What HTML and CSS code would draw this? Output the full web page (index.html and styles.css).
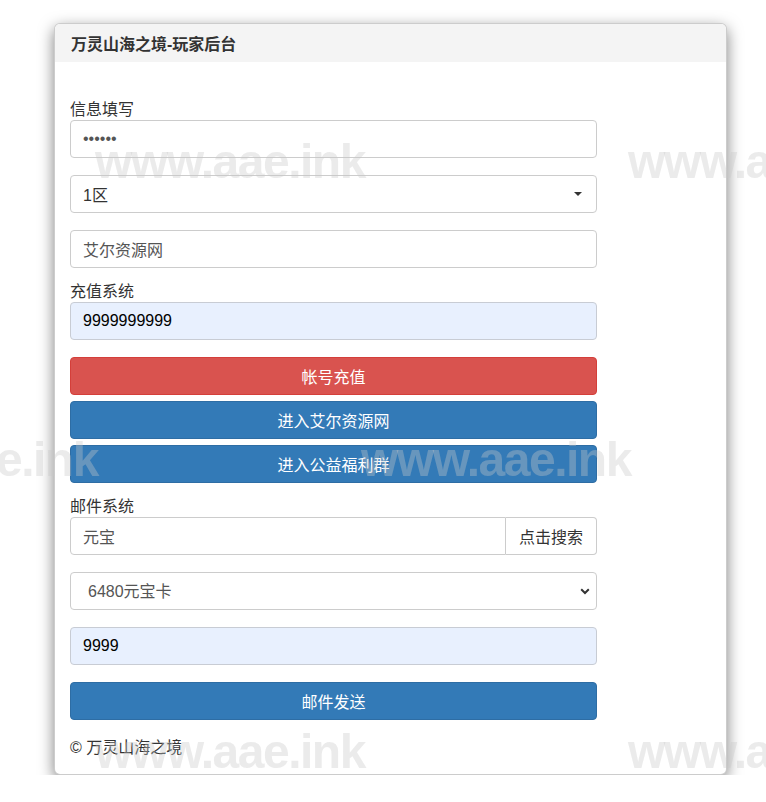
FILE: index.html
```html
<!DOCTYPE html>
<html lang="zh-CN">
<head>
<meta charset="utf-8">
<title>万灵山海之境-玩家后台</title>
<link rel="stylesheet" href="styles.css">
</head>
<body>
<div class="panel">
  <div class="panel-heading">万灵山海之境-玩家后台</div>
  <div class="panel-body">
    <form class="form">
      <label class="lbl">信息填写</label>
      <input class="fc pw gap17" type="password" value="123456">
      <div class="fc picker gap17"><span>1区</span><span class="caret"></span></div>
      <input class="fc gap14" type="text" value="艾尔资源网">

      <label class="lbl">充值系统</label>
      <input class="fc auto gap17" type="text" value="9999999999">
      <button type="button" class="btn red gap6">帐号充值</button>
      <button type="button" class="btn blue gap6">进入艾尔资源网</button>
      <button type="button" class="btn blue gap14">进入公益福利群</button>

      <label class="lbl">邮件系统</label>
      <div class="input-group gap17">
        <input class="fc ig-input" type="text" value="元宝">
        <button type="button" class="ig-btn">点击搜索</button>
      </div>
      <div class="selwrap gap17">
        <select class="fc sel">
          <option>6480元宝卡</option>
        </select>
        <svg class="chev" width="10" height="7" viewBox="0 0 10 7"><path d="M1.2 1.3 L5 5 L8.8 1.3" fill="none" stroke="#333" stroke-width="2"/></svg>
      </div>
      <input class="fc auto gap17" type="text" value="9999">
      <button type="button" class="btn blue">邮件发送</button>
    </form>
    <div class="foot">© 万灵山海之境</div>
  </div>
</div>

<div class="watermarks" aria-hidden="true">
  <span class="wm wm1">www.aae.ink</span>
  <span class="wm wm2">www.aae.ink</span>
  <span class="wm wm3">www.aae.ink</span>
  <span class="wm wm4">www.aae.ink</span>
  <span class="wm wm5">www.aae.ink</span>
  <span class="wm wm6">www.aae.ink</span>
</div>
</body>
</html>
```

FILE: styles.css
```css
html, body {
  margin: 0;
  background: #fff;
}
body {
  font-family: "Liberation Sans", Arial, "Noto Sans CJK SC", sans-serif;
  font-size: 16px;
  color: #333;
}

.panel {
  margin: 23px 0 0 54px;
  width: 673px;
  box-sizing: border-box;
  background: #fff;
  border: 1px solid rgba(0, 0, 0, 0.2);
  border-radius: 6px;
  box-shadow: 0 5px 15px rgba(0, 0, 0, 0.5);
}

.panel-heading {
  height: 38px;
  box-sizing: border-box;
  padding: 0 16px;
  display: flex;
  align-items: center;
  background: #f4f4f4;
  font-weight: bold;
  border-radius: 5px 5px 0 0;
}

.panel-body {
  padding: 38px 15px 16px;
}

.form {
  width: 527px;
  display: flex;
  flex-direction: column;
  margin: 0;
}

.lbl {
  display: block;
  height: 20px;
  line-height: 20px;
}

.gap17 { margin-bottom: 17px; }
.gap14 { margin-bottom: 14px; }
.gap6 { margin-bottom: 6px; }

.fc {
  display: block;
  width: 100%;
  height: 38px;
  box-sizing: border-box;
  margin-top: 0;
  border: 1px solid #ccc;
  border-radius: 4px;
  padding: 0 12px;
  font: inherit;
  color: #555;
  background: #fff;
  outline: none;
}

.pw {
  color: #555;
  letter-spacing: 0;
}

.picker {
  display: flex;
  align-items: center;
  justify-content: space-between;
  padding: 0 14px 0 12px;
  color: #333;
}
.caret {
  width: 0;
  height: 0;
  border-top: 4px solid #333;
  border-left: 4px solid transparent;
  border-right: 4px solid transparent;
}

.auto {
  background: #e8f0fe;
  color: #000;
  border-color: #c8ccd4;
}

.btn {
  display: block;
  width: 100%;
  height: 38px;
  box-sizing: border-box;
  border: 1px solid;
  border-radius: 4px;
  color: #fff;
  font: inherit;
  padding: 0;
  cursor: pointer;
}
.red {
  background: #d9534f;
  border-color: #d43f3a;
}
.blue {
  background: #337ab7;
  border-color: #2e6da4;
}

.input-group {
  display: flex;
}
.ig-input {
  flex: 1;
  width: auto;
  min-width: 0;
  border-radius: 4px 0 0 4px;
}
.ig-btn {
  height: 38px;
  box-sizing: border-box;
  padding: 0 13px;
  border: 1px solid #ccc;
  border-left: none;
  border-radius: 0 4px 4px 0;
  background: #fff;
  color: #333;
  font: inherit;
}

.selwrap {
  position: relative;
}
.sel {
  -webkit-appearance: none;
  appearance: none;
  padding-left: 17px;
}
.chev {
  position: absolute;
  right: 7px;
  top: 16px;
  pointer-events: none;
}

.foot {
  margin-top: 18px;
  line-height: 20px;
  color: #333;
}

.watermarks {
  position: fixed;
  inset: 0;
  pointer-events: none;
  overflow: hidden;
  z-index: 10;
}
.wm {
  position: absolute;
  font-family: "Liberation Sans", Arial, sans-serif;
  font-weight: bold;
  font-size: 48px;
  line-height: 48px;
  letter-spacing: -1.5px;
  white-space: nowrap;
  color: rgba(200, 200, 200, 0.36);
}
.wm1 { left: 95px; top: 138px; }
.wm2 { left: 628px; top: 138px; }
.wm3 { left: -172px; top: 436px; }
.wm4 { left: 361px; top: 436px; }
.wm5 { left: 95px; top: 728px; }
.wm6 { left: 628px; top: 728px; }
```
